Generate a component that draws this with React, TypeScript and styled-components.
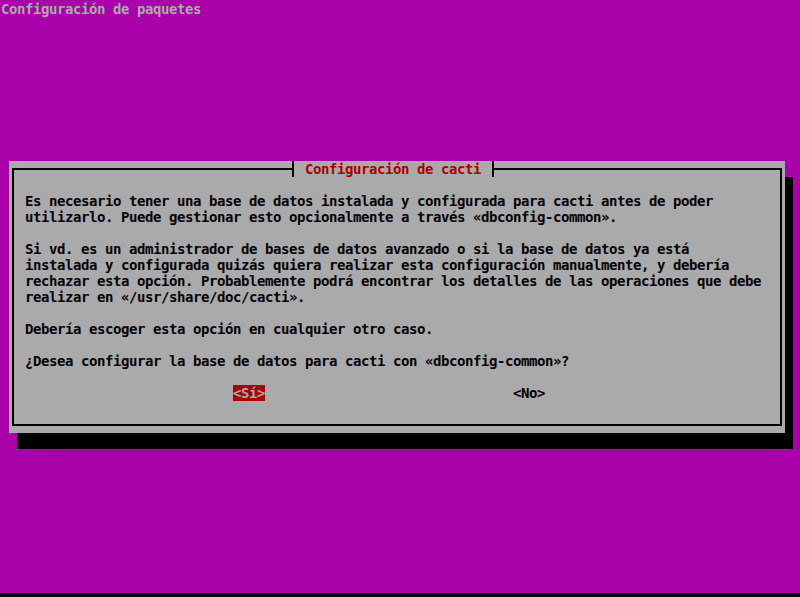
import React from "react";
import styled, { createGlobalStyle } from "styled-components";

const Global = createGlobalStyle`
  html, body { margin: 0; padding: 0; background: #000; }
  * { box-sizing: border-box; }
`;

const Screen = styled.div`
  width: 800px;
  height: 597px;
  background: #000;
  overflow: hidden;
  font-family: "DejaVu Sans Mono", "Liberation Mono", monospace;
  font-weight: bold;
  font-size: 14px;
  letter-spacing: -0.428px;
  line-height: 16px;
`;

const Terminal = styled.div`
  height: 593px;
  background: #aa00aa;
  padding: 1px 0 0 1px;
  display: flex;
  flex-direction: column;
`;

const Line = styled.div<{ $color?: string }>`
  height: 16px;
  white-space: pre;
  color: ${(p) => p.$color ?? "#000"};
`;

const Dialog = styled.div`
  margin: 144px 0 0 8px;
  width: 776px;
  height: 272px;
  background: #aaaaaa;
  box-shadow: 8px 16px 0 #000;
  padding: 0 3px 7px;
  display: flex;
  flex-direction: column;
`;

const Frame = styled.fieldset`
  margin: 0;
  min-width: 0;
  height: 265px;
  border: 2px solid #000;
  padding: 16px 11px 0;
`;

const Title = styled.legend`
  margin-left: 264px;
  padding: 0;
  height: 16px;
  display: flex;
  color: #aa0000;
  white-space: pre;
`;

const Tick = styled.span<{ $side: "left" | "right" }>`
  position: relative;
  display: inline-block;
  width: 8px;
  height: 16px;
  &::before {
    content: "";
    position: absolute;
    left: 3px;
    top: 0;
    width: 2px;
    height: 16px;
    background: #000;
  }
  &::after {
    content: "";
    position: absolute;
    top: 7px;
    height: 2px;
    left: ${(p) => (p.$side === "left" ? "0" : "3px")};
    width: 5px;
    background: #000;
  }
`;

const Body = styled.div`
  display: flex;
  flex-direction: column;
`;

const ButtonRow = styled.div`
  display: flex;
  height: 16px;
  padding-left: 208px;
  gap: 248px;
`;

const Button = styled.span<{ $selected?: boolean }>`
  white-space: pre;
  background: ${(p) => (p.$selected ? "#aa0000" : "transparent")};
  color: ${(p) => (p.$selected ? "#aaaaaa" : "#000")};
`;

const lines = [
  "Es necesario tener una base de datos instalada y configurada para cacti antes de poder",
  "utilizarlo. Puede gestionar esto opcionalmente a través «dbconfig-common».",
  "",
  "Si vd. es un administrador de bases de datos avanzado o si la base de datos ya está",
  "instalada y configurada quizás quiera realizar esta configuración manualmente, y debería",
  "rechazar esta opción. Probablemente podrá encontrar los detalles de las operaciones que debe",
  "realizar en «/usr/share/doc/cacti».",
  "",
  "Debería escoger esta opción en cualquier otro caso.",
  "",
  "¿Desea configurar la base de datos para cacti con «dbconfig-common»?",
  "",
];

export default function App() {
  return (
    <>
      <Global />
      <Screen>
        <Terminal>
          <Line $color="#aaaaaa">Configuración de paquetes</Line>
          <Dialog>
            <Frame>
              <Title>
                <Tick $side="left" />
                {" Configuración de cacti "}
                <Tick $side="right" />
              </Title>
              <Body>
                {lines.map((l, i) => (
                  <Line key={i}>{l}</Line>
                ))}
                <ButtonRow>
                  <Button $selected>{"<Sí>"}</Button>
                  <Button>{"<No>"}</Button>
                </ButtonRow>
              </Body>
            </Frame>
          </Dialog>
        </Terminal>
      </Screen>
    </>
  );
}
